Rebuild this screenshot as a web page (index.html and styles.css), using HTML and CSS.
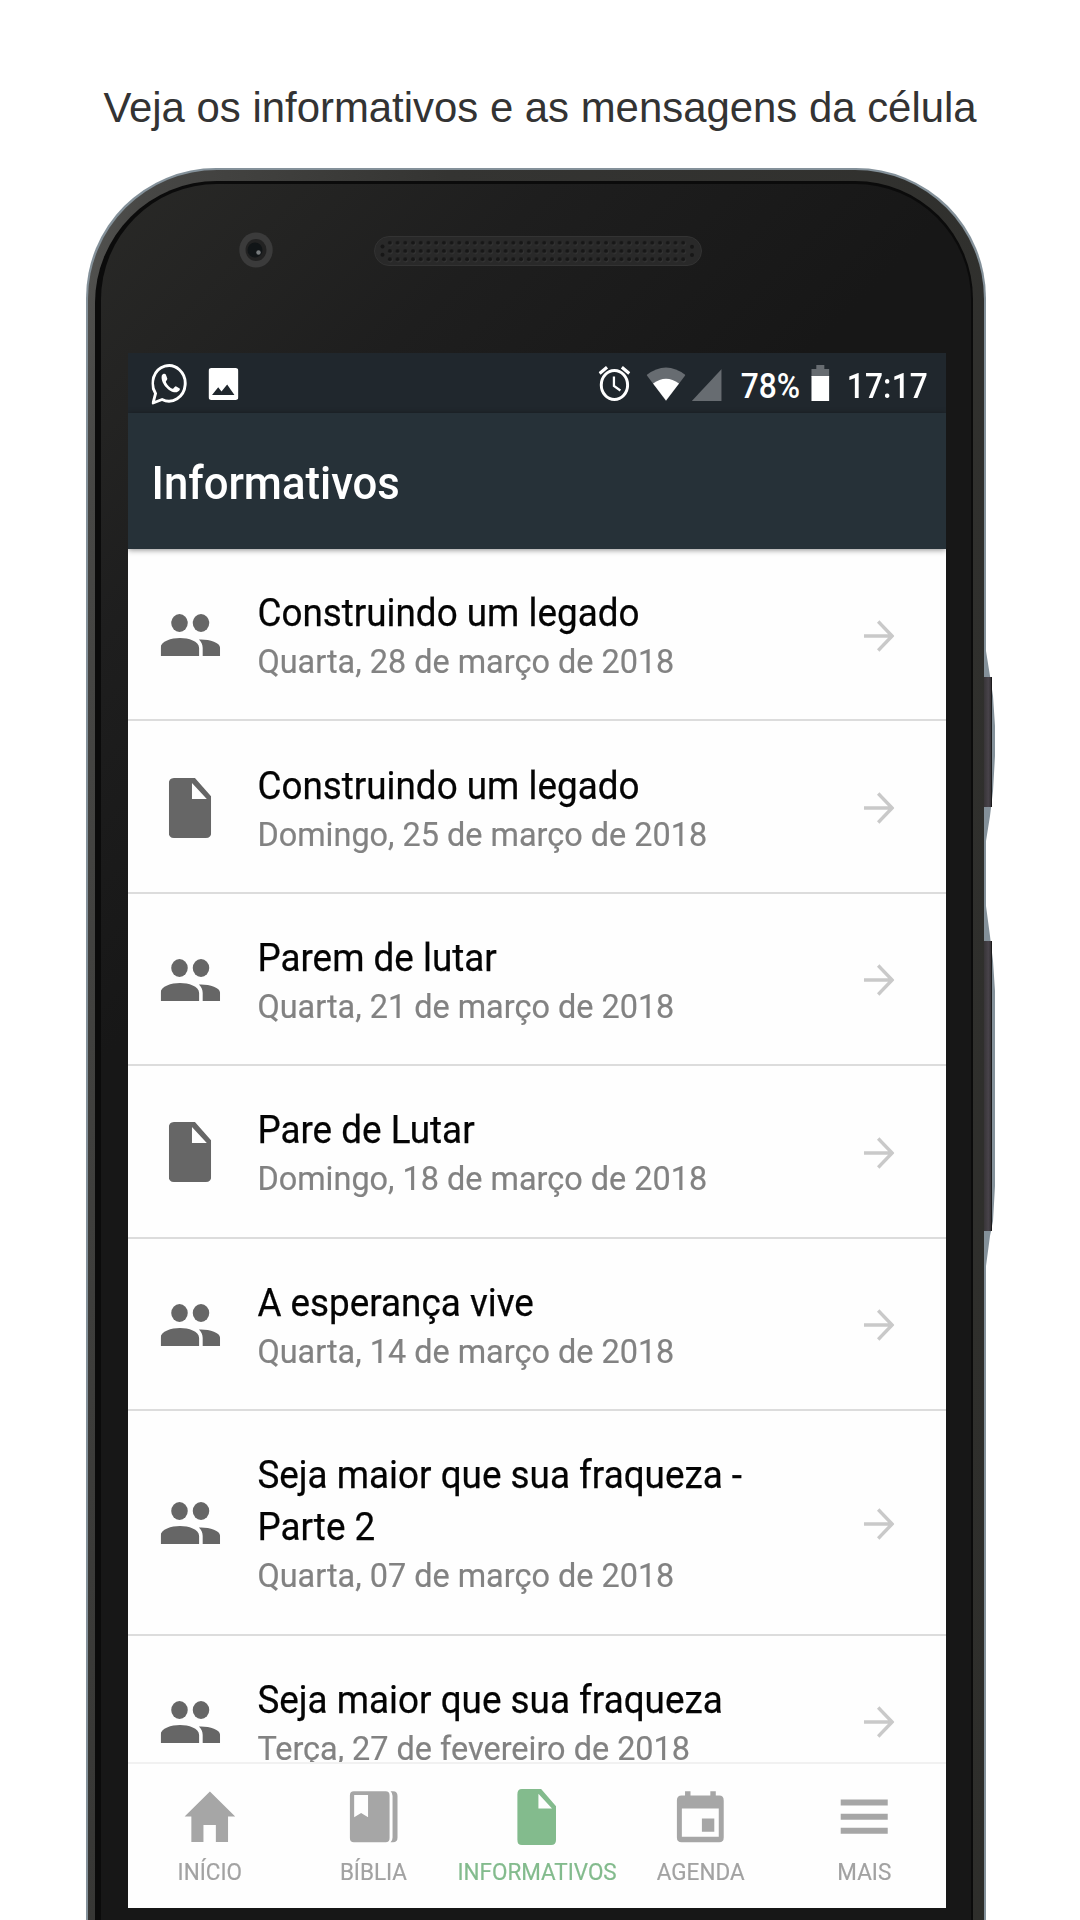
FILE: index.html
```html
<!DOCTYPE html>
<html lang="pt-BR">
<head>
<meta charset="utf-8">
<title>Informativos</title>
<link rel="stylesheet" href="styles.css">
</head>
<body>
<svg class="defs" width="0" height="0" aria-hidden="true">
  <symbol id="people" viewBox="0 0 60 42" preserveAspectRatio="none">
    <ellipse cx="19" cy="9" rx="8.3" ry="9"/><ellipse cx="40.6" cy="9" rx="8.3" ry="9"/>
    <path d="M0 42V34C0 27 11 24 19.500 24S38.700 27 38.700 34V42ZM42.300 42V34C42.300 30.500 40.800 27.700 38.500 25.500C48 25 59.800 28 59.800 34V42Z"/>
  </symbol>
  <symbol id="doc" viewBox="0 0 43 60" preserveAspectRatio="none">
    <path fill-rule="evenodd" d="M5.300 0H26.500L43 18.500V54Q43 60 37.500 60H5.300Q0 60 0 54V6Q0 0 5.300 0ZM23.500 5V21H38.500Z"/>
  </symbol>
  <symbol id="arrow" viewBox="0 0 32 32" preserveAspectRatio="none">
    <path d="M0 16H29M15 1.500L29.500 16L15 30.500" fill="none" stroke="currentColor" stroke-width="3.500"/>
  </symbol>
</svg>
<h1 class="headline">Veja os informativos e as mensagens da célula</h1>
<main class="phone">
  <svg class="keys" viewBox="0 0 12 640" aria-hidden="true">
    <defs><linearGradient id="k"><stop offset="0" stop-color="#383538"/><stop offset=".55" stop-color="#48434a"/><stop offset="1" stop-color="#302d30"/></linearGradient></defs>
    <path fill="#84919a" d="M0 0H2V5L6 30L9 50L11 80V110L9 145L6 170L2 195V260L6 290L9 315L11 345V540L9 575L6 590L2 620V640H0Z"/>
    <path fill="url(#k)" d="M0 31H8V161H0ZM0 295H8V585H0Z"/>
    <path fill="#1c1b1c" d="M7 31H8V161H7ZM7 295H8V585H7Z"/>
  </svg>
  <div class="frame"><div class="bezel"><div class="glass">
    <div class="sensors">
      <svg class="camera" viewBox="0 0 34 36"><ellipse cx="17" cy="18" rx="16.700" ry="17.600" fill="#3b3b3b"/><ellipse cx="17" cy="18" rx="10.500" ry="11" fill="#222"/><circle cx="16" cy="18" r="7.500" fill="#111517"/><circle cx="19.500" cy="20.500" r="2.200" fill="#777b7d"/></svg>
      <svg class="speaker" viewBox="0 0 328 30">
        <defs><pattern id="holes" x="12" y="3" width="7.720" height="8.200" patternUnits="userSpaceOnUse"><circle cx="4.300" cy="4.600" r="2.200" fill="#3b3b3b"/><circle cx="3.860" cy="3.900" r="2" fill="#171717"/></pattern></defs>
        <rect x=".5" y=".5" width="327" height="29" rx="14.500" fill="#292929" stroke="#333"/>
        <rect x="12" y="3" width="301" height="24.600" fill="url(#holes)"/>
        <g fill="#171717"><circle cx="8.500" cy="10.500" r="2"/><circle cx="8.500" cy="18.700" r="2"/><circle cx="318" cy="10.800" r="2"/><circle cx="318" cy="19" r="2"/></g>
      </svg>
    </div>
    <div class="screen"><div class="app">
      <header class="status">
        <svg class="whatsapp" viewBox="0 0 36 42" preserveAspectRatio="none">
          <path d="M1.500 40L4 30.500A16.200 17.800 0 1 1 10.500 36.500Z" fill="none" stroke="#fff" stroke-width="2.900" stroke-linejoin="round"/>
          <path fill="#fff" d="M10.200 12.500C11 10.500 13.500 10 14.200 11.500L15.700 15.600C16 17 13.800 18 14.300 19.200C16 22.500 18 24.500 20.700 25.700C22 26 23 23 24.200 23.200L28 25.500C29 26.500 26.500 29.500 24 29.300C17.500 29.500 8.500 20 10.200 12.500Z"/>
        </svg>
        <svg class="picture" viewBox="0 0 30 32" preserveAspectRatio="none"><path fill="#fff" fill-rule="evenodd" d="M3 0H27Q30 0 30 3V29Q30 32 27 32H3Q0 32 0 29V3Q0 0 3 0ZM3.500 27H26L18.700 16.500L13 23.500L9.700 19.200Z"/></svg>
        <span class="spacer"></span>
        <svg class="alarm" viewBox="0 0 32 35" preserveAspectRatio="none"><g fill="none" stroke="#fff"><ellipse cx="16" cy="19" rx="13.300" ry="14.500" stroke-width="3"/><path d="M15.500 10.500V20L22 24.500" stroke-width="2.300"/><path d="M1 7.500L8.500 1.200M23.500 1.200L31 7.500" stroke-width="3.200"/></g></svg>
        <svg class="wifi" viewBox="0 0 39 34" preserveAspectRatio="none"><path fill="#676c71" d="M0 8Q19.500-7 39 8L19.500 34Z"/><path fill="#fff" d="M6.500 16.500Q19.500 7 32.500 16.500L19.500 33.500Z"/></svg>
        <svg class="signal" viewBox="0 0 30 32" preserveAspectRatio="none"><path fill="#676c71" d="M30 0V32H0Z"/></svg>
        <span class="percent">78%</span>
        <svg class="battery" viewBox="0 0 18 36" preserveAspectRatio="none"><path fill="#676c71" d="M5 0H13V4H18V12H0V4H5Z"/><path fill="#fff" d="M0 11H18V36H0Z"/></svg>
        <span class="clock">17:17</span>
      </header>
      <div class="toolbar"><span>Informativos</span></div>
      <section class="list">
        <article class="row"><svg class="people"><use href="#people"/></svg><div class="text"><h2>Construindo um legado</h2><p>Quarta, 28 de março de 2018</p></div><svg class="arrow"><use href="#arrow"/></svg></article>
        <article class="row"><svg class="doc"><use href="#doc"/></svg><div class="text"><h2>Construindo um legado</h2><p>Domingo, 25 de março de 2018</p></div><svg class="arrow"><use href="#arrow"/></svg></article>
        <article class="row"><svg class="people"><use href="#people"/></svg><div class="text"><h2>Parem de lutar</h2><p>Quarta, 21 de março de 2018</p></div><svg class="arrow"><use href="#arrow"/></svg></article>
        <article class="row"><svg class="doc"><use href="#doc"/></svg><div class="text"><h2>Pare de Lutar</h2><p>Domingo, 18 de março de 2018</p></div><svg class="arrow"><use href="#arrow"/></svg></article>
        <article class="row"><svg class="people"><use href="#people"/></svg><div class="text"><h2>A esperança vive</h2><p>Quarta, 14 de março de 2018</p></div><svg class="arrow"><use href="#arrow"/></svg></article>
        <article class="row"><svg class="people"><use href="#people"/></svg><div class="text"><h2>Seja maior que sua fraqueza -<br>Parte 2</h2><p>Quarta, 07 de março de 2018</p></div><svg class="arrow"><use href="#arrow"/></svg></article>
        <article class="row"><svg class="people"><use href="#people"/></svg><div class="text"><h2>Seja maior que sua fraqueza</h2><p>Terça, 27 de fevereiro de 2018</p></div><svg class="arrow"><use href="#arrow"/></svg></article>
      </section>
      <nav class="tabs">
        <a><svg viewBox="0 0 52 56" preserveAspectRatio="none"><path d="M26 2.500L51.500 27.500H44.300V53H32V36H19.500V53H7.300V27.500H.5Z"/></svg><span>INÍCIO</span></a>
        <a><svg viewBox="0 0 52 56" preserveAspectRatio="none"><path fill-rule="evenodd" d="M6 2.300H38Q42 2.300 42 6.500V49Q42 53.300 38 53.300H6Q2 53.300 2 49V6.500Q2 2.300 6 2.300ZM6.300 6V28.200L13.300 24L20.300 28.200V6Z"/><path d="M43 2.300H45.500Q50 2.300 50 7V48.500Q50 53.300 45.500 53.300H43Q45 51.500 45 48.500V7Q45 4 43 2.300Z"/></svg><span>BÍBLIA</span></a>
        <a class="active"><svg class="tabdoc"><use href="#doc"/></svg><span>INFORMATIVOS</span></a>
        <a><svg viewBox="0 0 52 56" preserveAspectRatio="none"><path fill-rule="evenodd" d="M10.500 2.300H16V6.500H36V2.300H41.500V6.500H45Q49.500 6.500 49.500 11.500V48.500Q49.500 53.300 45 53.300H7Q2.300 53.300 2.300 48.500V11.500Q2.300 6.500 7 6.500H10.500ZM7.300 19.500V47.700H44.500V19.500ZM27.500 29.500H40V42.700H27.500Z"/></svg><span>AGENDA</span></a>
        <a><svg viewBox="0 0 52 56" preserveAspectRatio="none"><path d="M2.300 10.500H49.700V16.500H2.300ZM2.300 24.700H49.700V30.700H2.300ZM2.300 38.800H49.700V44.800H2.300Z"/></svg><span>MAIS</span></a>
      </nav>
    </div></div>
  </div></div></div>
</main>
</body>
</html>
```
FILE: styles.css
```css
* { box-sizing: border-box; margin: 0; padding: 0; }
body { width: 1080px; height: 1920px; overflow: hidden; background: #fff; font-family: Roboto, sans-serif; }
svg { display: block; flex: none; }
.defs { position: absolute; }
.headline { height: 168px; padding-top: 84px; text-align: center; white-space: nowrap; font: 400 41.900px/48px "Liberation Sans", sans-serif; color: #333; }

.phone { position: relative; width: 900px; height: 1752px; margin-left: 86px; padding: 2px 2px 0; border-radius: 130px 130px 0 0; background: #84919a; }
.keys { position: absolute; left: 898px; top: 478px; width: 12px; height: 640px; }
.frame { height: 100%; padding: 11px 11px 0 7px; border-radius: 129px 129px 0 0; background: linear-gradient(100deg, #555553 0, #474745 5%, #343432 30%, #2e2e2b 100%); }
.bezel { height: 100%; padding: 3px 2px 0 6px; border-radius: 122px 118px 0 0; background: #0b0b0b; }
.glass { height: 100%; padding-left: 25px; border-radius: 116px 116px 0 0; background: linear-gradient(135deg, #292927 0, #1e1e1e 320px, #171717 620px); }

.sensors { display: flex; height: 169px; padding: 48px 0 0 113px; }
.camera { width: 34px; height: 36px; }
.speaker { width: 328px; height: 30px; margin: 4px 0 0 101px; }

/* The app is laid out 904px wide and condensed to the width of the display. */
.screen { width: 818px; height: 1555px; margin-left: 2px; overflow: hidden; background: #fff; }
.app { display: flex; flex-direction: column; width: 904px; height: 1555px; transform: scaleX(.905); transform-origin: 0 0; }

.status { display: flex; flex: none; height: 60px; padding: 10px 20px 0 25.500px; background: #20272d; color: #fff; font-size: 35px; font-weight: 500; line-height: 41px; }
.whatsapp { width: 40px; height: 42px; }
.picture { width: 33px; height: 32px; margin: 5px 0 0 23.500px; }
.spacer { flex: 1; }
.alarm { width: 35px; height: 35px; margin: 3px 18px 0 0; }
.wifi { width: 43px; height: 34px; margin: 4px 7px 0 0; }
.signal { width: 33px; height: 32px; margin: 6px 21px 0 0; }
.percent { width: 70px; margin-top: 3px; }
.battery { width: 20px; height: 36px; margin: 2px 19px 0 8px; }
.clock { margin-top: 3px; letter-spacing: .2px; }

.toolbar { position: relative; z-index: 1; flex: none; height: 136px; padding: 0 0 0 25.500px; background: #263138; box-shadow: 0 1px 6px rgba(0,0,0,.45); color: #fff; font-size: 47px; font-weight: 500; line-height: 140px; }
.toolbar span { display: inline-block; transform: scaleX(1.027); transform-origin: 0 0; }

.list { height: 1213px; overflow: hidden; background: #fefefe; }
.row { display: grid; grid-template-columns: 143px 1fr 91px; align-items: center; min-height: 172.4px; padding: 38px 0 35px; border-bottom: 2px solid #dcdcdc; }
.row:nth-child(6) { min-height: 224.8px; }
.people { width: 66px; height: 42px; margin: -1px 0 0 36px; fill: #666; }
.doc { width: 47px; height: 60px; margin: -1px 0 0 45px; fill: #666; }
.arrow { width: 34px; height: 32px; color: #c9c9c9; }
h2, p { font-weight: 400; white-space: nowrap; transform: scaleX(1.06); transform-origin: 0 0; }
h2 { color: #040404; font-size: 38.400px; line-height: 52px; -webkit-text-stroke: .25px; }
p { color: #828282; font-size: 33.800px; line-height: 45px; -webkit-text-stroke: .2px; }

.tabs { display: grid; flex: none; grid-template-columns: repeat(5, 1fr); height: 146px; border-top: 2px solid #f1f1f1; background: #fefefe; }
.tabs a { display: flex; flex-direction: column; align-items: center; padding-top: 25px; color: #a2a2a2; fill: #a6a6a6; }
.tabs svg { width: 57px; height: 56px; }
.tabs .tabdoc { width: 43px; }
.tabs span { margin-top: 12px; font-size: 24.800px; line-height: 30px; -webkit-text-stroke: .2px; }
.tabs .active { color: #83bb8d; fill: #83bb8d; }
```
